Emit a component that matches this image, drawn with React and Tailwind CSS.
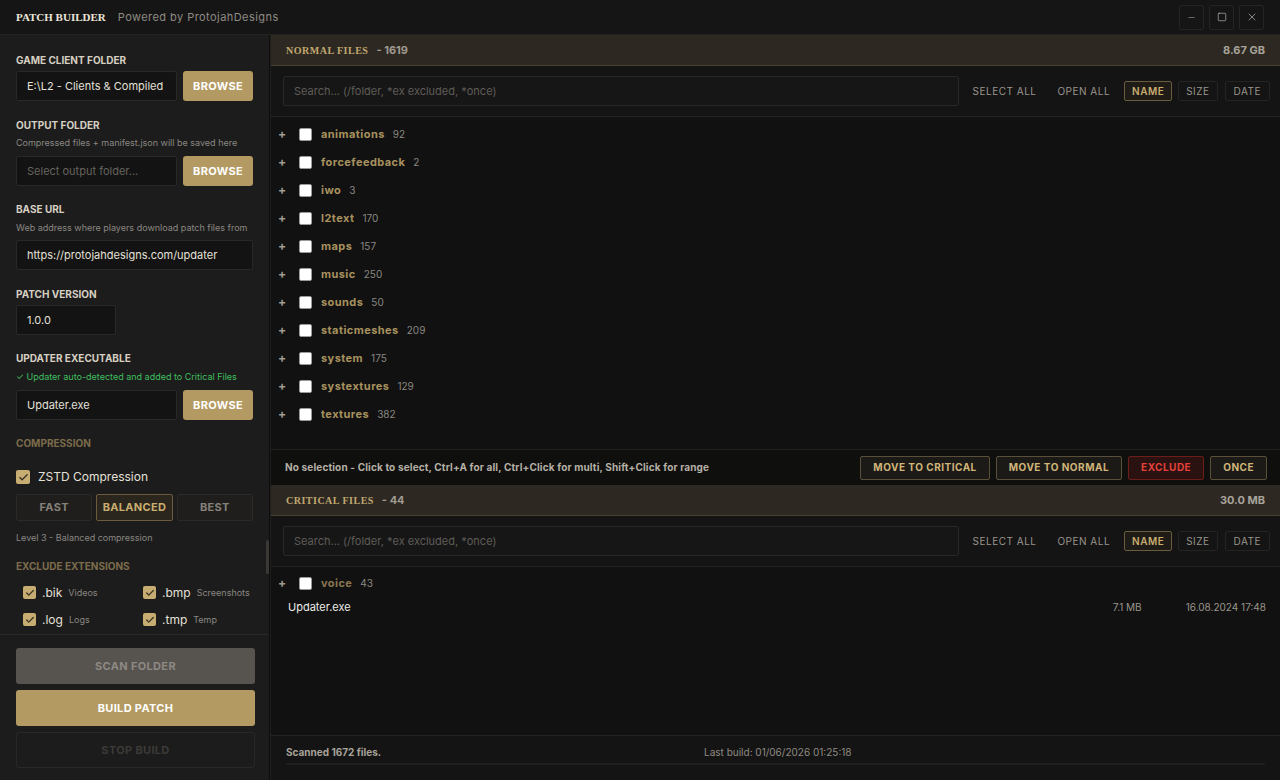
import { Minus, Square, X, Check } from "lucide-react";

const serif = { fontFamily: "'Liberation Serif', serif" };

function Label({ children, dim, className = "" }) {
  return (
    <div
      className={`text-[10px] leading-none font-bold uppercase ${dim ? "text-[#7d6c4c]" : "text-[#d6cfc2]"} ${className}`}
    >
      {children}
    </div>
  );
}

function Hint({ children, green, className = "" }) {
  return (
    <div className={`text-[9px] leading-none ${green ? "text-[#3fbf5f]" : "text-[#8a8782]"} ${className}`}>
      {children}
    </div>
  );
}

function Field({ value, placeholder, className = "" }) {
  return (
    <input
      readOnly
      value={value || ""}
      placeholder={placeholder}
      className={`h-[30px] min-w-0 px-[10px] bg-[#131313] border border-[#2a2826] rounded-[2px] text-[11px] text-[#e4e0d8] placeholder:text-[#66635e] outline-none ${className}`}
    />
  );
}

function Browse() {
  return (
    <button className="h-[30px] w-[70px] shrink-0 rounded-[3px] bg-[#b39a62] text-white text-[11px] font-bold tracking-[0.03em]">
      BROWSE
    </button>
  );
}

function Box({ size = 14, checked }) {
  return checked ? (
    <span
      className="inline-flex items-center justify-center rounded-[2px] bg-[#c7ad72] shrink-0"
      style={{ width: size, height: size }}
    >
      <Check size={size - 3} strokeWidth={3} className="text-[#3a3428]" />
    </span>
  ) : (
    <span className="inline-block rounded-[2px] bg-white shrink-0 border border-[#9a9a9a]" style={{ width: size, height: size }} />
  );
}

function Sidebar() {
  return (
    <aside className="w-[270px] shrink-0 bg-[#1c1c1c] border-r border-[#0d0d0d] flex flex-col">
      <div className="relative flex-1 overflow-hidden pl-4 pr-[16px] pt-[20px]">
        <Label>Game Client Folder</Label>
        <div className="flex gap-[6px] mt-[6px]">
          <Field value="E:\L2 - Clients & Compiled Files" className="flex-1" />
          <Browse />
        </div>

        <Label className="mt-[19px]">Output Folder</Label>
        <Hint className="mt-[8px]">Compressed files + manifest.json will be saved here</Hint>
        <div className="flex gap-[6px] mt-[9px]">
          <Field placeholder="Select output folder..." className="flex-1" />
          <Browse />
        </div>

        <Label className="mt-[18px]">Base URL</Label>
        <Hint className="mt-[9px]">Web address where players download patch files from</Hint>
        <Field value="https://protojahdesigns.com/updater" className="mt-[8px] w-full" />

        <Label className="mt-[19px]">Patch Version</Label>
        <Field value="1.0.0" className="mt-[6px] w-[100px]" />

        <Label className="mt-[18px]">Updater Executable</Label>
        <Hint green className="mt-[9px]">✓ Updater auto-detected and added to Critical Files</Hint>
        <div className="flex gap-[6px] mt-[9px]">
          <Field value="Updater.exe" className="flex-1" />
          <Browse />
        </div>

        <Label dim className="mt-[18px]">Compression</Label>
        <div className="flex items-center gap-2 mt-[22px] h-[14px]">
          <Box checked />
          <span className="text-[12px] leading-none text-[#e4e0d8]">ZSTD Compression</span>
        </div>
        <div className="grid grid-cols-3 gap-1 mt-[10px]">
          {["FAST", "BALANCED", "BEST"].map((l) => (
            <div
              key={l}
              className={`h-[27px] flex items-center justify-center text-[11px] font-bold tracking-[0.03em] rounded-[2px] border ${
                l === "BALANCED"
                  ? "border-[#6b5c3d] bg-[#2a261e] text-[#c9ad70]"
                  : "border-[#2c2a27] bg-[#1f1e1c] text-[#85817a]"
              }`}
            >
              {l}
            </div>
          ))}
        </div>
        <Hint className="mt-[12px]">Level 3 - Balanced compression</Hint>

        <Label dim className="mt-[19px]">Exclude Extensions</Label>
        <div className="grid grid-cols-[120px_1fr] gap-y-[14px] mt-[15px] pl-[7px]">
          {[
            [".bik", "Videos"],
            [".bmp", "Screenshots"],
            [".log", "Logs"],
            [".tmp", "Temp"],
          ].map(([e, d]) => (
            <div key={e} className="flex items-center gap-[6px] h-[13px]">
              <Box size={13} checked />
              <span className="text-[12px] leading-none text-[#e4e0d8]">{e}</span>
              <span className="text-[9px] leading-none text-[#8a8782]">{d}</span>
            </div>
          ))}
        </div>

        <div className="absolute right-0 top-[505px] w-[3px] h-[34px] bg-[#3a3936] rounded-full" />
      </div>

      <div className="border-t border-[#2a2826] pl-4 pr-[14px] pt-[13px] pb-3 flex flex-col gap-[6px]">
        <button className="h-[36px] rounded-[3px] bg-[#57534f] text-[#8d8984] text-[11px] font-bold tracking-[0.03em]">
          SCAN FOLDER
        </button>
        <button className="h-[36px] rounded-[3px] bg-[#b39a62] text-white text-[11px] font-bold tracking-[0.03em]">
          BUILD PATCH
        </button>
        <button className="h-[36px] rounded-[3px] border border-[#2a2826] text-[#3c3a37] text-[11px] font-bold tracking-[0.03em]">
          STOP BUILD
        </button>
      </div>
    </aside>
  );
}

function SectionHeader({ title, count, size }) {
  return (
    <div className="h-[31px] shrink-0 bg-[#2d2922] border-b border-[#4a4030] flex items-center px-[15px]">
      <span className="text-[10px] font-bold tracking-[0.05em] text-[#c2a870]" style={serif}>
        {title}
      </span>
      <span className="text-[11px] font-bold text-[#a09a90] ml-2">- {count}</span>
      <span className="ml-auto text-[11px] font-bold text-[#a8a39a]">{size}</span>
    </div>
  );
}

function Toolbar() {
  return (
    <div className="h-[51px] shrink-0 bg-[#141414] border-b border-[#26241f] flex items-center pl-[12px] pr-[10px]">
      <div className="flex-1 h-[30px] flex items-center px-[10px] bg-[#161616] border border-[#2a2826] rounded-[2px] text-[11px] text-[#5f5c57]">
        Search... (/folder, *ex excluded, *once)
      </div>
      <div className="flex items-center ml-[14px] text-[10px] tracking-[0.05em]">
        <span className="text-[#9a958c] mr-[21px]">SELECT ALL</span>
        <span className="text-[#9a958c] mr-[14px]">OPEN ALL</span>
        <span className="h-[20px] px-[7px] flex items-center border border-[#6b5c3d] bg-[#1f1c17] text-[#c9ad70] font-semibold rounded-[2px]">NAME</span>
        <span className="h-[20px] px-[7px] ml-[6px] flex items-center border border-[#262422] text-[#9a958c] rounded-[2px]">SIZE</span>
        <span className="h-[20px] px-[8px] ml-[7px] flex items-center border border-[#262422] text-[#9a958c] rounded-[2px]">DATE</span>
      </div>
    </div>
  );
}

function FolderRow({ name, count, dim }) {
  return (
    <div className="h-[28px] flex items-center pl-[7px]">
      <span className="w-[21px] text-[12px] text-[#a09a90] font-bold">+</span>
      <Box size={13} />
      <span className={`ml-[9px] text-[11px] font-bold tracking-[0.04em] ${dim ? "text-[#8a7650]" : "text-[#a8925f]"}`}>{name}</span>
      <span className="ml-[8px] text-[10px] text-[#8a8782]">{count}</span>
    </div>
  );
}

const normal = [
  ["animations", 92],
  ["forcefeedback", 2],
  ["iwo", 3],
  ["l2text", 170],
  ["maps", 157],
  ["music", 250],
  ["sounds", 50],
  ["staticmeshes", 209],
  ["system", 175],
  ["systextures", 129],
  ["textures", 382],
];

function ActionBtn({ children, red }) {
  return (
    <span
      className={`h-[24px] px-[12px] flex items-center border rounded-[2px] ${
        red ? "border-[#6e1e1a] bg-[#2a1210] text-[#e2413a]" : "border-[#5a4f3a] bg-[#1c1a16] text-[#d0b57a]"
      }`}
    >
      {children}
    </span>
  );
}

export default function App() {
  return (
    <div className="w-[1280px] h-[780px] flex flex-col bg-[#111111] overflow-hidden" style={{ fontFamily: "Inter, 'Noto Sans', sans-serif" }}>
      <header className="h-[35px] shrink-0 bg-[#151515] border-b border-[#232220] flex items-center pl-4 pr-[16px]">
        <span className="text-[11px] font-bold text-[#ece6da]" style={serif}>
          PATCH BUILDER
        </span>
        <span className="ml-3 text-[11px] text-[#8f8b84] tracking-[0.04em]">Powered by ProtojahDesigns</span>
        <div className="ml-auto flex gap-[5px]">
          <span className="w-[25px] h-[25px] border border-[#252422] rounded-[2px] flex items-center justify-center text-[#8a8782]">
            <Minus size={9} strokeWidth={2} />
          </span>
          <span className="w-[25px] h-[25px] border border-[#252422] rounded-[2px] flex items-center justify-center text-[#c8c4bc]">
            <Square size={10} strokeWidth={1.5} />
          </span>
          <span className="w-[25px] h-[25px] border border-[#252422] rounded-[2px] flex items-center justify-center text-[#c8c4bc]">
            <X size={12} strokeWidth={1.3} />
          </span>
        </div>
      </header>

      <div className="flex flex-1 min-h-0">
        <Sidebar />
        <main className="flex-1 flex flex-col min-w-0 border-l border-[#1f1e1c]">
          <SectionHeader title="NORMAL FILES" count="1619" size="8.67 GB" />
          <Toolbar />
          <div className="h-[332px] shrink-0 bg-[#111111] pt-[3px]">
            {normal.map(([n, c]) => (
              <FolderRow key={n} name={n} count={c} />
            ))}
          </div>

          <div className="h-[36px] shrink-0 bg-[#0f0f0d] border-t border-[#242220] flex items-center pl-[14px] pr-[13px]">
            <span className="text-[10px] font-bold tracking-[0.015em] text-[#b5afa5]">
              No selection - Click to select, Ctrl+A for all, Ctrl+Click for multi, Shift+Click for range
            </span>
            <div className="ml-auto flex gap-[6px] text-[10px] font-bold tracking-[0.05em]">
              <ActionBtn>MOVE TO CRITICAL</ActionBtn>
              <ActionBtn>MOVE TO NORMAL</ActionBtn>
              <ActionBtn red>EXCLUDE</ActionBtn>
              <ActionBtn>ONCE</ActionBtn>
            </div>
          </div>

          <SectionHeader title="CRITICAL FILES" count="44" size="30.0 MB" />
          <Toolbar />
          <div className="flex-1 bg-[#111111] pt-[2px]">
            <FolderRow name="voice" count={43} dim />
            <div className="h-[20px] flex items-center pl-[17px] pr-[14px]">
              <span className="text-[11px] text-[#ecebe8]">Updater.exe</span>
              <span className="ml-auto text-[10px] text-[#9a958c] w-[28px] text-right whitespace-nowrap">7.1 MB</span>
              <span className="ml-[45px] text-[10px] text-[#9a958c] whitespace-nowrap">16.08.2024 17:48</span>
            </div>
          </div>

          <div className="h-[45px] shrink-0 bg-[#141414] border-t border-[#262422] px-[15px] pt-[9px]">
            <div className="flex text-[10px]">
              <span className="font-bold text-[#a8a39a] w-[418px]">Scanned 1672 files.</span>
              <span className="text-[#8f8a82]">Last build: 01/06/2026 01:25:18</span>
            </div>
            <div className="mt-[3px] h-[2px] bg-[#1f1f1f] rounded" />
          </div>
        </main>
      </div>
    </div>
  );
}
